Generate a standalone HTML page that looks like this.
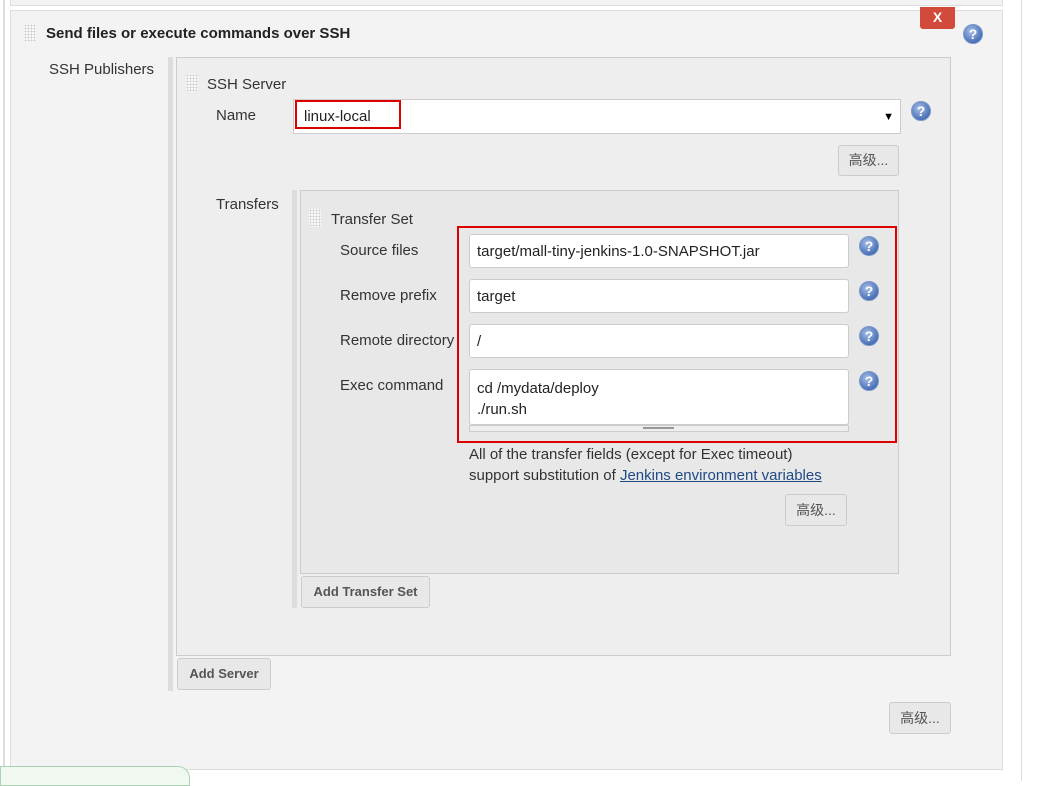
<!DOCTYPE html>
<html><head><meta charset="utf-8"><style>
*{box-sizing:border-box}
body{margin:0;width:1045px;height:781px;background:#fff;position:relative;overflow:hidden;font-family:"Liberation Sans","Noto Sans CJK SC",sans-serif;font-size:15px;color:#333}
.a{position:absolute}
.lbl{position:absolute;font-size:15px;color:#333}
.inp{position:absolute;background:#fff;border:1px solid #ccc;border-radius:3px;font-size:15px;color:#222;padding:0 7px;line-height:33px}
.btn{position:absolute;background:#e8e8e8;border:1px solid #ccc;border-radius:3px;font-size:13px;font-weight:bold;color:#555;text-align:center}
.grip{position:absolute;width:12px;height:18px;background-image:radial-gradient(#ccc 0.8px,transparent 1px);background-size:3px 3px;background-color:#f9f9f9}
.help{position:absolute;width:20px;height:20px;border-radius:50%;background:radial-gradient(circle at 40% 35%,#a8c0e8,#4a70b8 70%,#33589a);border:1px solid #7a98c8;color:#fff;font-size:14px;font-weight:bold;text-align:center;line-height:18px}
</style></head><body>
<div class="a" style="left:3px;top:0;width:2px;height:781px;background:#ddd"></div>
<div class="a" style="left:10px;top:0;width:993px;height:6px;border:1px solid #ddd;border-top:none;background:#f3f3f3"></div>
<div class="a" style="left:1021px;top:0;width:1px;height:781px;background:#ddd"></div>
<div class="a" style="left:10px;top:10px;width:993px;height:760px;border:1px solid #ddd;background:#f3f3f3"></div>

<div class="grip" style="left:24px;top:24px"></div>
<div class="lbl" style="left:46px;top:25px;font-weight:bold;font-size:15px;color:#222">Send files or execute commands over SSH</div>
<div class="a" style="left:920px;top:7px;width:35px;height:22px;background:#d24a39;border-radius:0 0 3px 3px;color:#fff;font-weight:bold;font-size:14px;text-align:center;line-height:20px">X</div>
<div class="help" style="left:963px;top:24px">?</div>

<div class="lbl" style="left:49px;top:61px">SSH Publishers</div>
<div class="a" style="left:168px;top:57px;width:5px;height:634px;background:#ddd"></div>
<div class="a" style="left:176px;top:57px;width:775px;height:599px;border:1px solid #ccc;background:#eeeeee"></div>
<div class="grip" style="left:186px;top:74px"></div>
<div class="lbl" style="left:207px;top:76px">SSH Server</div>
<div class="lbl" style="left:216px;top:107px">Name</div>
<div class="inp" style="left:293px;top:99px;width:608px;height:35px;border-radius:0;line-height:34px;padding-left:10px">linux-local<span style="position:absolute;right:6px;top:0;font-size:11px;color:#000">▼</span></div>
<div class="a" style="left:295px;top:100px;width:106px;height:29px;border:2px solid #d00"></div>
<div class="help" style="left:911px;top:101px">?</div>
<div class="btn" style="left:838px;top:145px;width:61px;height:31px;line-height:29px;font-weight:normal;font-size:14px">高级...</div>

<div class="lbl" style="left:216px;top:196px">Transfers</div>
<div class="a" style="left:292px;top:190px;width:5px;height:418px;background:#ddd"></div>
<div class="a" style="left:300px;top:190px;width:599px;height:384px;border:1px solid #ccc;background:#e8e8e8"></div>
<div class="grip" style="left:309px;top:209px"></div>
<div class="lbl" style="left:331px;top:211px">Transfer Set</div>

<div class="lbl" style="left:340px;top:242px">Source files</div>
<div class="inp" style="left:469px;top:234px;width:380px;height:34px">target/mall-tiny-jenkins-1.0-SNAPSHOT.jar</div>
<div class="help" style="left:859px;top:236px">?</div>
<div class="lbl" style="left:340px;top:287px">Remove prefix</div>
<div class="inp" style="left:469px;top:279px;width:380px;height:34px">target</div>
<div class="help" style="left:859px;top:281px">?</div>
<div class="lbl" style="left:340px;top:332px">Remote directory</div>
<div class="inp" style="left:469px;top:324px;width:380px;height:34px">/</div>
<div class="help" style="left:859px;top:326px">?</div>
<div class="lbl" style="left:340px;top:377px">Exec command</div>
<div class="inp" style="left:469px;top:369px;width:380px;height:56px;line-height:21px;padding-top:8px">cd /mydata/deploy<br>./run.sh</div>
<div class="a" style="left:469px;top:425px;width:380px;height:7px;background:#eee;border:1px solid #ccc"></div>
<div class="a" style="left:643px;top:427px;width:31px;height:2px;border-top:1px solid #999;border-bottom:1px solid #999"></div>
<div class="help" style="left:859px;top:371px">?</div>
<div class="a" style="left:457px;top:226px;width:440px;height:217px;border:2px solid #d00"></div>

<div class="lbl" style="left:469px;top:444px;line-height:21px">All of the transfer fields (except for Exec timeout)<br>support substitution of <span style="color:#204a87;text-decoration:underline">Jenkins environment variables</span></div>
<div class="btn" style="left:785px;top:494px;width:62px;height:32px;line-height:30px;font-weight:normal;font-size:14px">高级...</div>

<div class="btn" style="left:301px;top:576px;width:129px;height:32px;line-height:30px">Add Transfer Set</div>
<div class="btn" style="left:177px;top:658px;width:94px;height:32px;line-height:30px">Add Server</div>
<div class="btn" style="left:889px;top:702px;width:62px;height:32px;line-height:30px;font-weight:normal;font-size:14px">高级...</div>

<div class="a" style="left:0;top:766px;width:190px;height:20px;background:#f1f8ef;border:1px solid #a8d4b4;border-radius:0 12px 0 0"></div>
</body></html>
